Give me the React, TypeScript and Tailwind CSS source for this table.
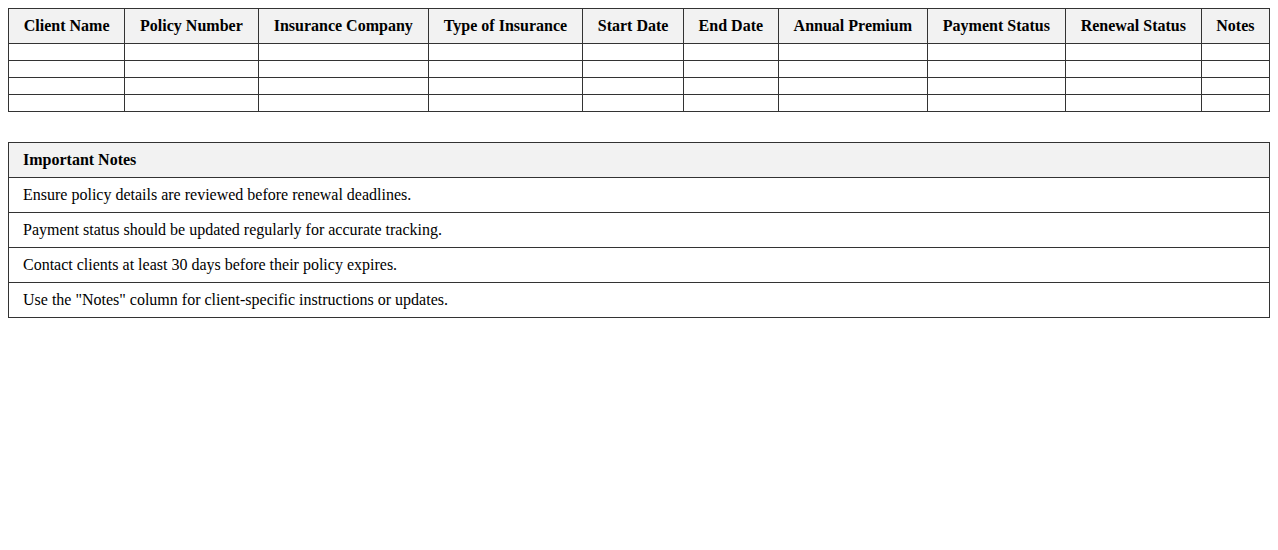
import React from "react";

const headers = [
  "Client Name",
  "Policy Number",
  "Insurance Company",
  "Type of Insurance",
  "Start Date",
  "End Date",
  "Annual Premium",
  "Payment Status",
  "Renewal Status",
  "Notes",
];

const notes = [
  "Ensure policy details are reviewed before renewal deadlines.",
  "Payment status should be updated regularly for accurate tracking.",
  "Contact clients at least 30 days before their policy expires.",
  'Use the "Notes" column for client-specific instructions or updates.',
];

export default function App() {
  return (
    <div
      className="p-2 text-black bg-white min-h-[550px]"
      style={{ fontFamily: '"Liberation Serif", "Times New Roman", serif' }}
    >
      <table className="w-full border-collapse text-[16px]">
        <thead>
          <tr>
            {headers.map((h) => (
              <th
                key={h}
                className="border border-[#333] bg-[#f2f2f2] px-[14px] py-2 font-bold text-center leading-[18px]"
              >
                {h}
              </th>
            ))}
          </tr>
        </thead>
        <tbody>
          {[0, 1, 2, 3].map((r) => (
            <tr key={r}>
              {headers.map((h) => (
                <td key={h} className="border border-[#333] px-[14px] py-2 h-[17px] leading-[0px]"></td>
              ))}
            </tr>
          ))}
        </tbody>
      </table>

      <table className="w-full border-collapse text-[16px] mt-[30px]">
        <thead>
          <tr>
            <th className="border border-[#333] bg-[#f2f2f2] px-[14px] py-2 font-bold text-left leading-[18px]">
              Important Notes
            </th>
          </tr>
        </thead>
        <tbody>
          {notes.map((n) => (
            <tr key={n}>
              <td className="border border-[#333] px-[14px] py-2 leading-[18px]">{n}</td>
            </tr>
          ))}
        </tbody>
      </table>
    </div>
  );
}
